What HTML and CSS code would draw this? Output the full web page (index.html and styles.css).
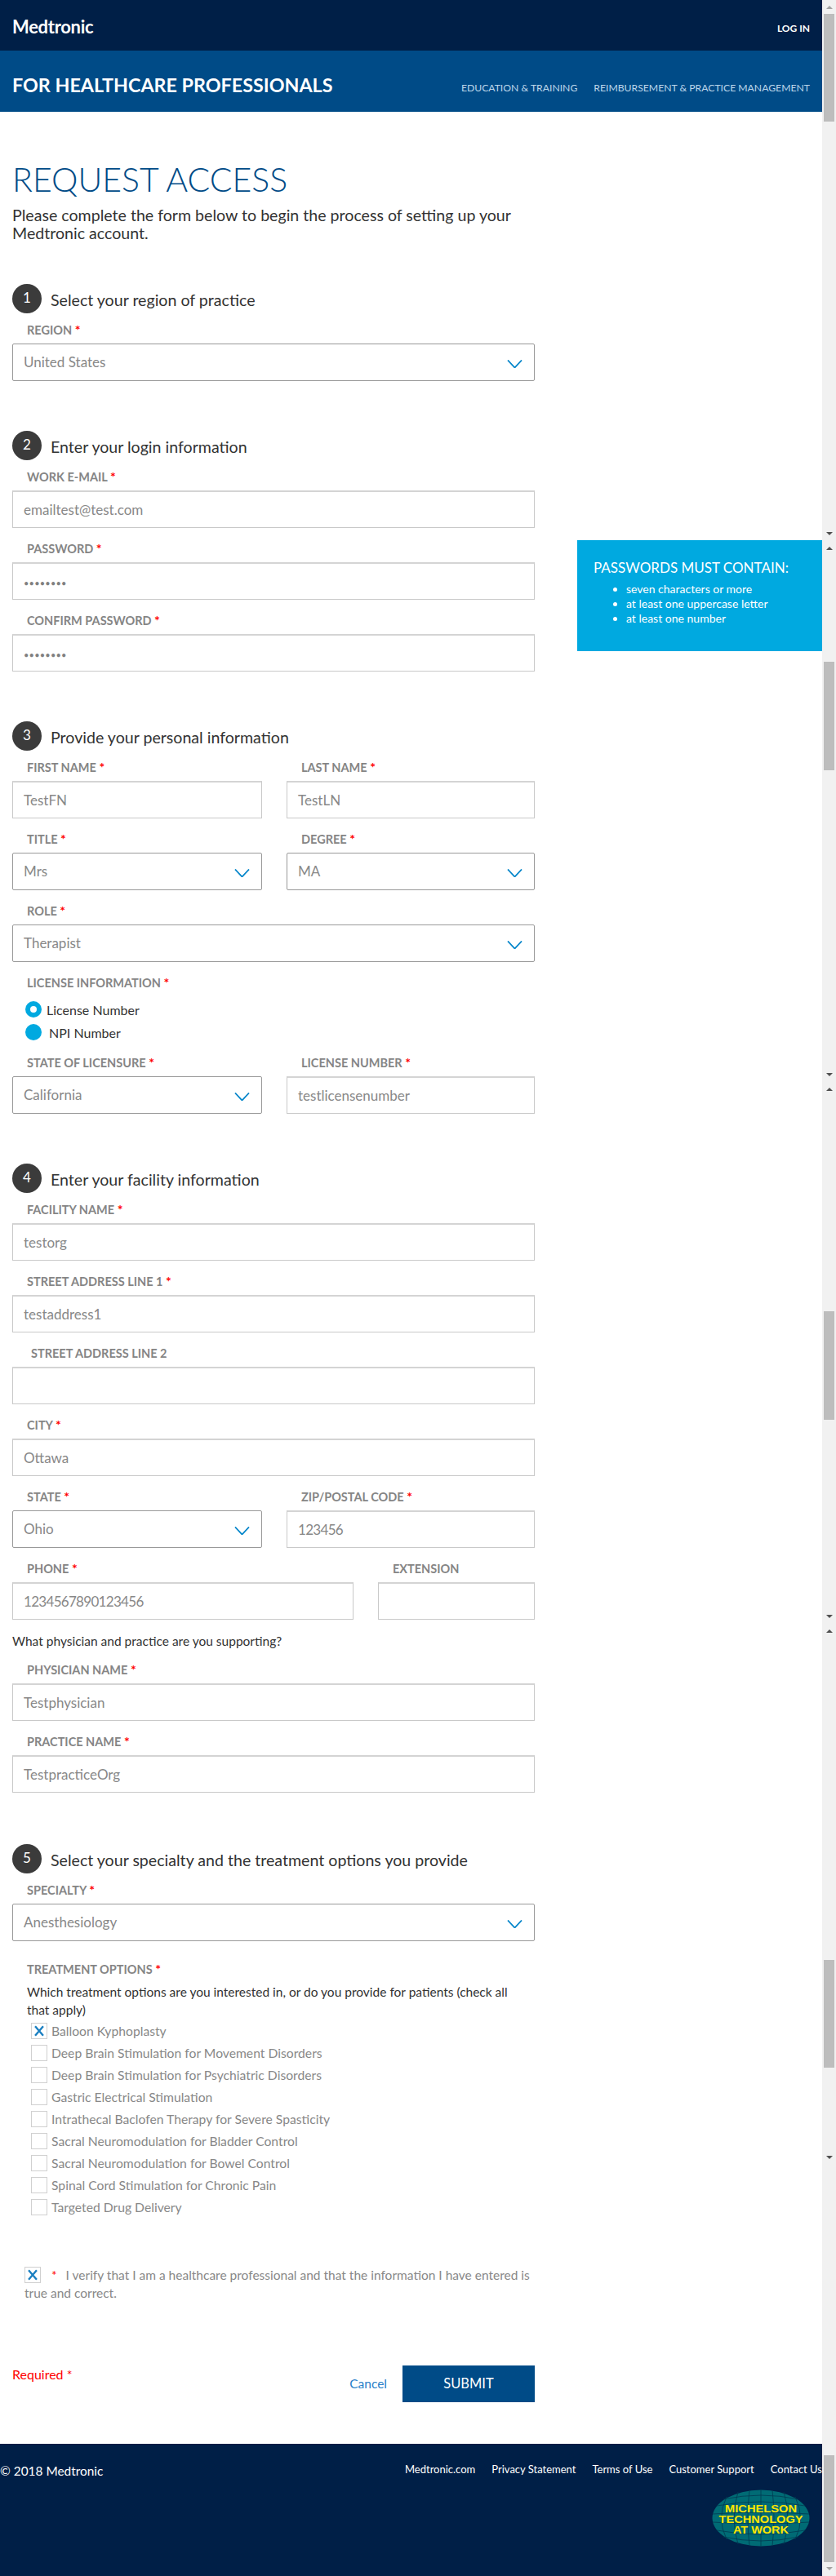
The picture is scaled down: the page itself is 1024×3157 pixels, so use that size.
FILE: index.html
```html
<!DOCTYPE html>
<html lang="en">
<head>
<meta charset="utf-8">
<title>Request Access</title>
<link rel="stylesheet" href="styles.css">
</head>
<body>
<div class="page">
  <header>
    <div class="topbar">
      <span class="logo">Medtronic</span>
      <a class="login">LOG IN</a>
    </div>
    <div class="subbar">
      <span class="brand">FOR HEALTHCARE PROFESSIONALS</span>
      <nav class="subnav"><a>EDUCATION &amp; TRAINING</a><a>REIMBURSEMENT &amp; PRACTICE MANAGEMENT</a></nav>
    </div>
  </header>

  <main class="main">
    <h1>REQUEST ACCESS</h1>
    <p class="intro">Please complete the form below to begin the process of setting up your Medtronic account.</p>

    <section class="step step-first">
      <h2 class="step-head"><span class="num">1</span>Select your region of practice</h2>
      <div class="field">
        <div class="lab">REGION <i>*</i></div>
        <div class="box sel">United States<svg class="chev" viewBox="0 0 19 10"><path d="M1 .5 9.5 9.5 18 .5"/></svg></div>
      </div>
    </section>

    <section class="step withaside">
      <div class="col">
        <h2 class="step-head"><span class="num">2</span>Enter your login information</h2>
        <div class="field">
          <div class="lab">WORK E-MAIL <i>*</i></div>
          <div class="box">emailtest@test.com</div>
        </div>
        <div class="field">
          <div class="lab">PASSWORD <i>*</i></div>
          <div class="box"><span class="dots">••••••••</span></div>
        </div>
        <div class="field">
          <div class="lab">CONFIRM PASSWORD <i>*</i></div>
          <div class="box"><span class="dots">••••••••</span></div>
        </div>
      </div>
      <aside class="tip">
        <h3>PASSWORDS MUST CONTAIN:</h3>
        <ul>
          <li>seven characters or more</li>
          <li>at least one uppercase letter</li>
          <li>at least one number</li>
        </ul>
      </aside>
    </section>

    <section class="step">
      <h2 class="step-head"><span class="num">3</span>Provide your personal information</h2>
      <div class="row">
        <div class="field"><div class="lab">FIRST NAME <i>*</i></div><div class="box">TestFN</div></div>
        <div class="field"><div class="lab">LAST NAME <i>*</i></div><div class="box">TestLN</div></div>
      </div>
      <div class="row">
        <div class="field"><div class="lab">TITLE <i>*</i></div><div class="box sel">Mrs<svg class="chev" viewBox="0 0 19 10"><path d="M1 .5 9.5 9.5 18 .5"/></svg></div></div>
        <div class="field"><div class="lab">DEGREE <i>*</i></div><div class="box sel">MA<svg class="chev" viewBox="0 0 19 10"><path d="M1 .5 9.5 9.5 18 .5"/></svg></div></div>
      </div>
      <div class="field"><div class="lab">ROLE <i>*</i></div><div class="box sel">Therapist<svg class="chev" viewBox="0 0 19 10"><path d="M1 .5 9.5 9.5 18 .5"/></svg></div></div>
      <div class="radios">
        <div class="lab">LICENSE INFORMATION <i>*</i></div>
        <div class="radio"><span class="dot on"></span><span>License Number</span></div>
        <div class="radio"><span class="dot"></span><span class="npi">NPI Number</span></div>
      </div>
      <div class="row">
        <div class="field"><div class="lab">STATE OF LICENSURE <i>*</i></div><div class="box sel">California<svg class="chev" viewBox="0 0 19 10"><path d="M1 .5 9.5 9.5 18 .5"/></svg></div></div>
        <div class="field"><div class="lab">LICENSE NUMBER <i>*</i></div><div class="box">testlicensenumber</div></div>
      </div>
    </section>

    <section class="step step-long">
      <h2 class="step-head"><span class="num">4</span>Enter your facility information</h2>
      <div class="field"><div class="lab">FACILITY NAME <i>*</i></div><div class="box">testorg</div></div>
      <div class="field"><div class="lab">STREET ADDRESS LINE 1 <i>*</i></div><div class="box">testaddress1</div></div>
      <div class="field"><div class="lab lab-in">STREET ADDRESS LINE 2</div><div class="box"></div></div>
      <div class="field"><div class="lab">CITY <i>*</i></div><div class="box">Ottawa</div></div>
      <div class="row">
        <div class="field"><div class="lab">STATE <i>*</i></div><div class="box sel">Ohio<svg class="chev" viewBox="0 0 19 10"><path d="M1 .5 9.5 9.5 18 .5"/></svg></div></div>
        <div class="field"><div class="lab">ZIP/POSTAL CODE <i>*</i></div><div class="box digits">123456</div></div>
      </div>
      <div class="row row-phone">
        <div class="field"><div class="lab">PHONE <i>*</i></div><div class="box digits">1234567890123456</div></div>
        <div class="field"><div class="lab">EXTENSION</div><div class="box"></div></div>
      </div>
      <p class="support">What physician and practice are you supporting?</p>
      <div class="field"><div class="lab">PHYSICIAN NAME <i>*</i></div><div class="box">Testphysician</div></div>
      <div class="field"><div class="lab">PRACTICE NAME <i>*</i></div><div class="box">TestpracticeOrg</div></div>
    </section>

    <section class="step step-last">
      <h2 class="step-head"><span class="num">5</span>Select your specialty and the treatment options you provide</h2>
      <div class="field"><div class="lab">SPECIALTY <i>*</i></div><div class="box sel">Anesthesiology<svg class="chev" viewBox="0 0 19 10"><path d="M1 .5 9.5 9.5 18 .5"/></svg></div></div>
      <div class="treat">
        <div class="lab">TREATMENT OPTIONS <i>*</i></div>
        <p class="treat-q">Which treatment options are you interested in, or do you provide for patients (check all that apply)</p>
        <ul class="checks">
          <li><span class="cb"><svg viewBox="0 0 20 20"><path d="M4.500 3.500 15.500 16.500M15.500 3.500 4.500 16.500"/></svg></span>Balloon Kyphoplasty</li>
          <li><span class="cb"></span>Deep Brain Stimulation for Movement Disorders</li>
          <li><span class="cb"></span>Deep Brain Stimulation for Psychiatric Disorders</li>
          <li><span class="cb"></span>Gastric Electrical Stimulation</li>
          <li><span class="cb"></span>Intrathecal Baclofen Therapy for Severe Spasticity</li>
          <li><span class="cb"></span>Sacral Neuromodulation for Bladder Control</li>
          <li><span class="cb"></span>Sacral Neuromodulation for Bowel Control</li>
          <li><span class="cb"></span>Spinal Cord Stimulation for Chronic Pain</li>
          <li><span class="cb"></span>Targeted Drug Delivery</li>
        </ul>
      </div>
      <div class="verify">
        <div class="verify-line"><span class="cb"><svg viewBox="0 0 20 20"><path d="M4.500 3.500 15.500 16.500M15.500 3.500 4.500 16.500"/></svg></span><i>*</i><span>I verify that I am a healthcare professional and that the information I have entered is</span></div>
        <div>true and correct.</div>
      </div>
      <div class="actions">
        <span class="req">Required *</span>
        <a class="cancel">Cancel</a>
        <a class="submit">SUBMIT</a>
      </div>
    </section>
  </main>

  <footer class="foot">
    <div class="foot-row">
      <span class="copy">© 2018 Medtronic</span>
      <nav class="foot-links"><a>Medtronic.com</a><a>Privacy Statement</a><a>Terms of Use</a><a>Customer Support</a><a>Contact Us</a></nav>
    </div>
    <svg class="badge" viewBox="0 0 120 70">
      <ellipse cx="60" cy="35" rx="59.500" ry="34.500" class="b-fill"/>
      <g class="b-grid">
        <path d="M60 0V70M46 1Q42 35 46 69M74 1Q78 35 74 69M32 3Q22 35 32 67M88 3Q98 35 88 67M18 9Q5 35 18 61M102 9Q115 35 102 61"/>
        <path d="M14 12Q60 2 106 12M6 20Q60 10 114 20M1 30Q60 26 119 30M1 40Q60 44 119 40M6 50Q60 60 114 50M14 58Q60 68 106 58"/>
      </g>
      <text x="60" y="28" textLength="88" lengthAdjust="spacingAndGlyphs" class="b-text">MICHELSON</text>
      <text x="60" y="41" textLength="103" lengthAdjust="spacingAndGlyphs" class="b-text">TECHNOLOGY</text>
      <text x="60" y="54" textLength="68" lengthAdjust="spacingAndGlyphs" class="b-text">AT WORK</text>
    </svg>
  </footer>

  <div class="rail" aria-hidden="true">
    <span class="ar up dim a1"></span>
    <span class="th t1"></span>
    <span class="ar dn a2"></span>
    <span class="ar up a3"></span>
    <span class="th t2"></span>
    <span class="ar dn a4"></span>
    <span class="ar up a5"></span>
    <span class="th t3"></span>
    <span class="ar dn a6"></span>
    <span class="ar up a7"></span>
    <span class="th t4"></span>
    <span class="ar dn a8"></span>
    <span class="th t5"></span>
    <span class="ar dn dim a9"></span>
  </div>
</div>
</body>
</html>
```
FILE: styles.css
```css
* { box-sizing: border-box; }
html, body { margin: 0; padding: 0; background: #fff; }
body { font-family: Lato, "Liberation Sans", sans-serif; color: #333; }
.page { position: relative; width: 1024px; height: 3157px; padding-right: 17px; overflow: hidden; }

.topbar { height: 62px; background: #001f47; display: flex; justify-content: space-between; align-items: center; padding: 0 15px; color: #fff; }
.logo { font-size: 22px; font-weight: 700; letter-spacing: -0.3px; margin-top: 2px; }
.login { font-size: 12px; font-weight: 700; margin-top: 6px; }
.subbar { height: 75px; background: #004b87; display: flex; justify-content: space-between; align-items: center; padding: 14px 15px 0; color: #fff; }
.brand { font-size: 23.300px; font-weight: 700; margin-top: -6px; }
.subnav { display: flex; gap: 20px; font-size: 12.200px; color: #bcd6ea; margin-top: 2px; }

.main { padding: 0 15px; }
h1 { margin: 0; padding-top: 57px; font-size: 41px; line-height: 52px; font-weight: 300; color: #004b87; }
.intro { margin: 7px 0 0; width: 640px; font-size: 19.600px; line-height: 22px; color: #333; }

.step { width: 640px; padding-bottom: 43px; }
.step-first { margin-top: 51px; }
.step-long { padding-bottom: 45px; }
.withaside { width: 992px; display: flex; align-items: flex-start; gap: 52px; }
.col { width: 640px; flex: none; }
.step-last { padding-bottom: 0; }
.step-head { margin: 0 0 13px; display: flex; align-items: flex-start; height: 36px; line-height: 40px; font-size: 19.600px; font-weight: 400; color: #333; }
.num { width: 36px; height: 36px; border-radius: 50%; background: #3b3b3b; color: #fff; font-size: 17px; line-height: 20px; flex: none; display: flex; align-items: center; justify-content: center; margin-right: 11px; padding-bottom: 2px; }

.field { margin-bottom: 18px; min-width: 0; }
.lab { height: 16px; line-height: 16px; margin-bottom: 8px; padding-left: 18px; font-size: 14.500px; font-weight: 700; color: #858585; }
.lab i { color: #f00; font-style: normal; font-size: 16px; line-height: 10px; }
.lab-in { padding-left: 23px; }
.box { position: relative; height: 46px; line-height: 43px; padding-left: 13px; border: 1px solid #c9c9c9; border-top: 2px solid #d4d4d4; font-size: 17px; color: #888; background: #fff; }
.sel { border: 1px solid #999; border-radius: 2px; line-height: 44px; }
.digits { letter-spacing: -0.7px; }
.chev { position: absolute; right: 14px; top: 19px; width: 19px; height: 10px; fill: none; stroke: #0085ca; stroke-width: 1.800; }
.dots { font-size: 11px; letter-spacing: 0.2px; color: #808080; }

.row { display: grid; grid-template-columns: 306px 304px; column-gap: 30px; }
.row-phone { grid-template-columns: 418px 192px; }

.radios { margin-bottom: 20px; margin-top: 17px; }
.radios .lab { margin-bottom: 14px; }
.radio { display: flex; align-items: center; height: 20px; margin-bottom: 8px; padding-left: 16px; font-size: 16px; color: #333; gap: 6px; }
.radio:last-child { margin-bottom: 0; }
.dot { width: 20px; height: 20px; border-radius: 50%; background: #00a9e0; flex: none; }
.dot.on { background: #fff; border: 6px solid #00a9e0; }
.npi { margin-left: 3px; }

.tip { width: 300px; height: 136px; flex: none; margin-top: 134px; padding: 23px 20px 0; background: #00a9e0; color: #fff; }
.tip h3 { margin: 0; font-size: 17px; line-height: 22px; font-weight: 400; }
.tip ul { margin: 6px 0 0; padding: 0 0 0 40px; list-style: disc; font-size: 14px; line-height: 18px; }

.support { margin: -3px 0 17px; font-size: 15.500px; line-height: 22px; color: #333; }

.treat { padding-left: 18px; margin-top: 27px; }
.treat .lab { padding-left: 0; margin-bottom: 8px; }
.treat-q { margin: 0 0 5px; width: 600px; font-size: 15.500px; line-height: 22px; color: #333; }
.checks { margin: 0; padding: 0 0 0 5px; list-style: none; }
.checks li { display: flex; align-items: center; height: 20px; margin-bottom: 7px; font-size: 15.700px; color: #888; gap: 5px; }
.cb { display: inline-block; width: 20px; height: 20px; flex: none; border: 1px solid #d0d0d0; background: #fff; }
.cb svg { display: block; width: 18px; height: 18px; fill: none; stroke: #1a7fc1; stroke-width: 2.600; }

.verify { margin: 62px 0 0; padding-left: 15px; font-size: 15.500px; line-height: 22px; color: #888; }
.verify-line { white-space: nowrap; }
.verify .cb { vertical-align: -4px; margin-right: 13px; }
.verify i { color: #f00; font-style: normal; margin-right: 11px; }

.actions { display: flex; align-items: flex-start; margin-top: 78px; }
.req { color: #f00; font-size: 16px; line-height: 22px; flex: 1; }
.cancel { color: #2a7fc9; font-size: 15.500px; line-height: 45px; margin-right: 19px; }
.submit { width: 162px; height: 45px; line-height: 44px; background: #004b87; color: #fff; font-size: 16.500px; text-align: center; }

.foot { position: absolute; left: 0; right: 17px; top: 2995px; height: 162px; background: #001f47; color: #fff; }
.foot-row { display: flex; justify-content: space-between; align-items: center; padding-top: 20px; }
.copy { font-size: 15.400px; margin-top: 4px; }
.foot-links { display: flex; gap: 20px; font-size: 13px; }
.badge { display: block; width: 120px; height: 70px; margin: 14px 0 0 872px; }
.b-fill { fill: #006b75; }
.b-grid { fill: none; stroke: #003a52; stroke-width: 0.800; }
.b-text { fill: #ffe600; font-family: "Liberation Sans", sans-serif; font-weight: 700; font-size: 13px; text-anchor: middle; }

.rail { position: absolute; top: 0; right: 0; width: 17px; height: 3157px; background: #f1f1f1; }
.th { position: absolute; left: 2px; width: 13px; background: #bdbdbd; }
.ar { position: absolute; left: 5px; width: 0; height: 0; border-left: 4px solid transparent; border-right: 4px solid transparent; }
.up { border-bottom: 4px solid #505050; }
.dn { border-top: 4px solid #505050; }
.up.dim { border-bottom-color: #a3a3a3; }
.dn.dim { border-top-color: #a3a3a3; }
.t1 { top: 17px; height: 132px; }
.t2 { top: 811px; height: 133px; }
.t3 { top: 1607px; height: 133px; }
.t4 { top: 2402px; height: 132px; }
.t5 { top: 3009px; height: 131px; }
.a1 { top: 7px; }
.a2 { top: 652px; }
.a3 { top: 670px; }
.a4 { top: 1315px; }
.a5 { top: 1333px; }
.a6 { top: 1979px; }
.a7 { top: 1997px; }
.a8 { top: 2642px; }
.a9 { top: 3146px; }
```
